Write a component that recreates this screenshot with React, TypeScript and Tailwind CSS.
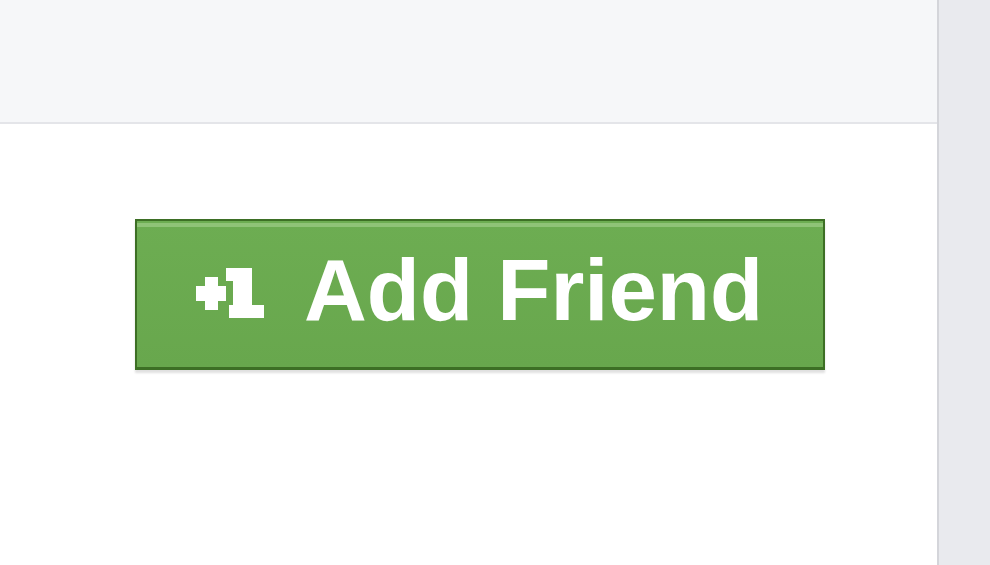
import React from "react";

function PlusOneIcon() {
  return (
    <svg width="70" height="52" viewBox="0 0 70 52" fill="#ffffff" className="shrink-0">
      {/* plus */}
      <rect x="0" y="18" width="30" height="15" />
      <rect x="9" y="9" width="13" height="33" />
      {/* one */}
      <rect x="30" y="0" width="20" height="13" />
      <rect x="37" y="0" width="19" height="50" />
      <rect x="33" y="37" width="35" height="13" />
    </svg>
  );
}

export default function App() {
  return (
    <div className="flex h-[565px] w-[990px] overflow-hidden bg-white" style={{ fontFamily: '"Liberation Sans", Arial, sans-serif' }}>
      <div className="flex flex-1 flex-col">
        <div className="h-[124px] shrink-0 border-b-2 border-[#e4e5e9] bg-[#f6f7f9]" />
        <div className="flex-1 bg-white pl-[135px] pt-[95px]">
          <button className="relative flex h-[151px] w-[690px] items-center border-2 border-b-[3px] border-[#3d6f25] bg-gradient-to-b from-[#6dad52] to-[#68a74d] pl-[59px] shadow-[0_3px_2px_rgba(0,0,0,0.12)]">
            <span className="absolute left-0 right-0 top-[2px] h-[4px] bg-[#8fc377]" />
            <PlusOneIcon />
            <span className="ml-[38px] -mt-[10px] text-[87px] font-bold leading-none text-white">
              Add Friend
            </span>
          </button>
        </div>
      </div>
      <div className="w-[53px] shrink-0 border-l-2 border-[#d4d5da] bg-[#e9eaee]" />
    </div>
  );
}
